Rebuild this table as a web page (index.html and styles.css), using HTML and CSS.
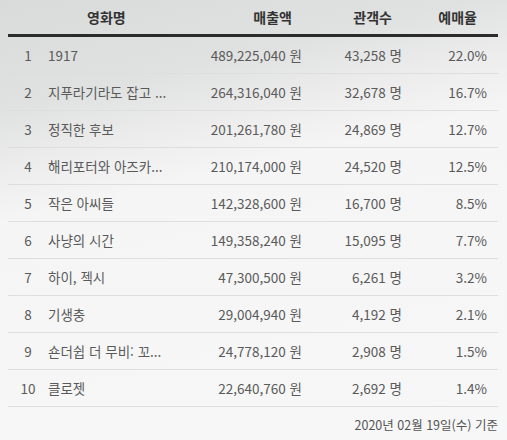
FILE: index.html
```html
<!DOCTYPE html>
<html lang="ko">
<head>
    <meta charset="UTF-8">
    <meta name="viewport" content="width=device-width, initial-scale=1.0">
    <title>박스오피스</title>
    <link rel="stylesheet" href="styles.css">
</head>
<body>
    <table class="boxoffice">
        <colgroup>
            <col class="c-rank">
            <col class="c-title">
            <col class="c-sales">
            <col class="c-audi">
            <col class="c-rate">
        </colgroup>
        <thead>
            <tr>
                <th></th>
                <th class="th-title">영화명</th>
                <th class="num">매출액</th>
                <th class="num">관객수</th>
                <th class="num">예매율</th>
            </tr>
        </thead>
        <tbody>
            <tr><td class="rank">1</td><td>1917</td><td class="num">489,225,040 원</td><td class="num">43,258 명</td><td class="num">22.0%</td></tr>
            <tr><td class="rank">2</td><td>지푸라기라도 잡고 ...</td><td class="num">264,316,040 원</td><td class="num">32,678 명</td><td class="num">16.7%</td></tr>
            <tr><td class="rank">3</td><td>정직한 후보</td><td class="num">201,261,780 원</td><td class="num">24,869 명</td><td class="num">12.7%</td></tr>
            <tr><td class="rank">4</td><td>해리포터와 아즈카...</td><td class="num">210,174,000 원</td><td class="num">24,520 명</td><td class="num">12.5%</td></tr>
            <tr><td class="rank">5</td><td>작은 아씨들</td><td class="num">142,328,600 원</td><td class="num">16,700 명</td><td class="num">8.5%</td></tr>
            <tr><td class="rank">6</td><td>사냥의 시간</td><td class="num">149,358,240 원</td><td class="num">15,095 명</td><td class="num">7.7%</td></tr>
            <tr><td class="rank">7</td><td>하이, 젝시</td><td class="num">47,300,500 원</td><td class="num">6,261 명</td><td class="num">3.2%</td></tr>
            <tr><td class="rank">8</td><td>기생충</td><td class="num">29,004,940 원</td><td class="num">4,192 명</td><td class="num">2.1%</td></tr>
            <tr><td class="rank">9</td><td>숀더쉽 더 무비: 꼬...</td><td class="num">24,778,120 원</td><td class="num">2,908 명</td><td class="num">1.5%</td></tr>
            <tr><td class="rank">10</td><td>클로젯</td><td class="num">22,640,760 원</td><td class="num">2,692 명</td><td class="num">1.4%</td></tr>
        </tbody>
    </table>
    <div class="base-date">2020년 02월 19일(수) 기준</div>
</body>
</html>
```

FILE: styles.css
```css
html, body {
    height: 100%;
}
body {
    margin: 0;
    padding: 0 9px 0 8px;
    font-family: "Noto Sans CJK KR", "Noto Sans", sans-serif;
    color: #5a5a5a;
    background: #f7f7f7 linear-gradient(167deg, #d9dada 0%, #e0e1e1 20%, #ececec 30%, #f5f5f5 40%, #f7f7f7 100%);
    box-sizing: border-box;
}
.boxoffice {
    width: 100%;
    border-collapse: collapse;
    table-layout: fixed;
}
.c-rank { width: 40px; }
.c-title { width: 140px; }
.c-sales { width: 124px; }
.c-audi { width: 100px; }
.c-rate { width: 86px; }
.boxoffice th {
    height: 34px;
    padding: 0;
    font-size: 14px;
    font-weight: bold;
    color: #333;
    border-bottom: 3px solid #2b2b2b;
}
.boxoffice th.th-title {
    text-align: left;
    padding-left: 39px;
}
.boxoffice th.num {
    text-align: right;
    padding-right: 20px;
}
.boxoffice th:last-child {
    padding-right: 21px;
}
.boxoffice td {
    height: 36px;
    padding: 0;
    font-size: 13.5px;
    border-bottom: 1px solid #dedede;
    white-space: nowrap;
    overflow: hidden;
}
.boxoffice td.rank {
    text-align: center;
}
.boxoffice td.num {
    text-align: right;
    padding-right: 10px;
}
.boxoffice td:last-child {
    padding-right: 11px;
}
.base-date {
    text-align: right;
    font-size: 12.5px;
    color: #555;
    padding-top: 8px;
}
```
